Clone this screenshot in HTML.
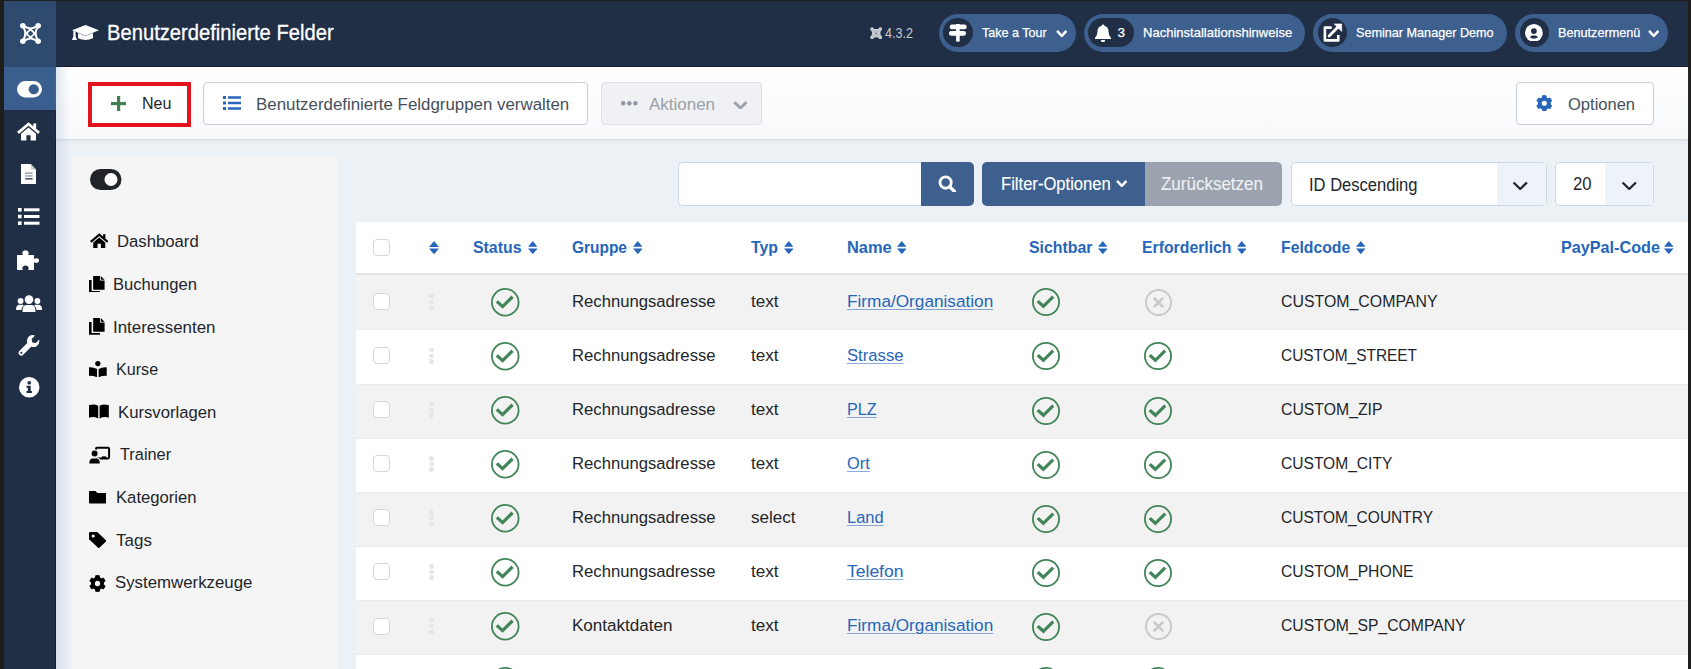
<!DOCTYPE html>
<html><head><meta charset="utf-8"><style>
html,body{margin:0;padding:0;}
body{width:1691px;height:669px;overflow:hidden;position:relative;background:#1e1e1c;font-family:"Liberation Sans", sans-serif;}
svg{display:block;}
</style></head><body>
<div style="position:absolute;left:56px;top:67px;width:1632px;height:602px;background:#ecf1f6;"></div><div style="position:absolute;left:56px;top:67px;width:16px;height:602px;background:linear-gradient(90deg,#d9e1ec,#ecf1f6);"></div><div style="position:absolute;left:56px;top:1px;width:1632px;height:66px;background:#202e46;"></div><div style="position:absolute;left:56px;top:66px;width:1632px;height:1px;background:#131b2d;"></div><svg style="position:absolute;left:72px;top:24px;" width="27" height="17" viewBox="0 3 27 19" preserveAspectRatio="none"><g fill="#fff"><path d="M0 10 L13.5 4 L27 10 L13.5 16 Z"/>
<path d="M6 13 L13.5 16.5 L21 13 L21 19 Q13.5 23 6 19 Z"/>
<path d="M1.3 10.8 L3.6 11.8 L3.6 17 L5 21 L0 21 L1.3 17 Z"/></g></svg><div style="position:absolute;left:107.3px;top:21.86px;font-size:21.9px;line-height:21.9px;color:#fff;font-weight:normal;white-space:nowrap;transform:scaleX(0.922);transform-origin:0 0;-webkit-text-stroke:0.3px #fff;">Benutzerdefinierte Felder</div><svg style="position:absolute;left:869.6px;top:26.7px;" width="12.4" height="12.4" viewBox="0 0 24 24" preserveAspectRatio="none"><g fill="none" stroke="#c5cad1" stroke-width="3.4">
<path d="M4.0 4.0 Q16.2 7.8 20.0 20.0"/><path d="M4.0 4.0 Q7.8 16.2 20.0 20.0"/>
<path d="M20.0 4.0 Q16.2 16.2 4.0 20.0"/><path d="M20.0 4.0 Q7.8 7.8 4.0 20.0"/>
<path d="M4.0 4.0 Q12 7.6 20.0 4.0"/><path d="M4.0 20.0 Q12 16.4 20.0 20.0"/>
<path d="M4.0 4.0 Q7.6 12 4.0 20.0"/><path d="M20.0 4.0 Q16.4 12 20.0 20.0"/>
</g><g fill="#c5cad1"><circle cx="4.0" cy="4.0" r="3.6"/><circle cx="20.0" cy="4.0" r="3.6"/><circle cx="4.0" cy="20.0" r="3.6"/><circle cx="20.0" cy="20.0" r="3.6"/></g></svg><div style="position:absolute;left:884.6px;top:25.98px;font-size:14.2px;line-height:14.2px;color:#c5cad1;font-weight:normal;white-space:nowrap;transform:scaleX(0.885);transform-origin:0 0;">4.3.2</div><div style="position:absolute;left:938.5px;top:13.5px;width:137.0px;height:38px;border-radius:19px;background:#3e608f;"></div><div style="position:absolute;left:943.2px;top:17.8px;width:29.5px;height:29.5px;background:#202e46;border-radius:50%;"></div><svg style="position:absolute;left:949.2px;top:24.1px;" width="18" height="17.6" viewBox="0 0 18 17.6" preserveAspectRatio="none"><g fill="#fff"><rect x="7.1" y="0" width="3.6" height="17.6"/>
<rect x="0.7" y="0.6" width="17" height="4.7" rx="2.2"/><rect x="0" y="7" width="17" height="4.7" rx="2.2"/></g></svg><div style="position:absolute;left:982px;top:26.47px;font-size:13.5px;line-height:13.5px;color:#fff;font-weight:normal;white-space:nowrap;transform:scaleX(0.929);transform-origin:0 0;-webkit-text-stroke:0.25px #fff;">Take a Tour</div><svg style="position:absolute;left:1055.5px;top:28.8px;" width="11.5" height="8" viewBox="0 -1 16 10.5" preserveAspectRatio="none"><path d="M1.5 1.5 L8 8 L14.5 1.5" fill="none" stroke="#fff" stroke-width="3.6" stroke-linecap="butt" stroke-linejoin="miter"/></svg><div style="position:absolute;left:1083.5px;top:13.5px;width:221.0px;height:38px;border-radius:19px;background:#3e608f;"></div><div style="position:absolute;left:1088px;top:18px;width:46px;height:29px;background:#202e46;border-radius:14.5px;"></div><svg style="position:absolute;left:1095px;top:23.5px;" width="16" height="18.3" viewBox="0 0 16 18.3" preserveAspectRatio="none"><path fill="#fff" d="M8 0.5 Q9.3 0.5 9.3 1.8 Q13.5 2.8 13.6 8 Q13.6 11.8 16 14 V15 H0 V14 Q2.4 11.8 2.4 8 Q2.5 2.8 6.7 1.8 Q6.7 0.5 8 0.5 Z"/><path fill="#fff" d="M5.8 16 H10.2 Q10 18.3 8 18.3 Q6 18.3 5.8 16 Z"/></svg><div style="position:absolute;left:1117.5px;top:26.47px;font-size:13.5px;line-height:13.5px;color:#fff;font-weight:normal;white-space:nowrap;-webkit-text-stroke:0.25px #fff;">3</div><div style="position:absolute;left:1142.5px;top:26.47px;font-size:13.5px;line-height:13.5px;color:#fff;font-weight:normal;white-space:nowrap;transform:scaleX(0.965);transform-origin:0 0;-webkit-text-stroke:0.25px #fff;">Nachinstallationshinweise</div><div style="position:absolute;left:1312.5px;top:13.5px;width:194.5px;height:38px;border-radius:19px;background:#3e608f;"></div><div style="position:absolute;left:1317.8px;top:17.8px;width:29.5px;height:29.5px;background:#202e46;border-radius:50%;"></div><svg style="position:absolute;left:1322px;top:22px;" width="21" height="21" viewBox="0 0 21 21" preserveAspectRatio="none"><path d="M9.7 5.6 H2.9 V18.4 H16.3 V12.9" fill="none" stroke="#fff" stroke-width="2.6" stroke-linejoin="round"/>
<path d="M7.1 13.9 L16 5" stroke="#fff" stroke-width="2.8" stroke-linecap="round"/><path d="M12.2 1.9 H19.7 V9.4 Z" fill="#fff" stroke="#fff" stroke-width="0.6" stroke-linejoin="round"/></svg><div style="position:absolute;left:1355.5px;top:26.47px;font-size:13.5px;line-height:13.5px;color:#fff;font-weight:normal;white-space:nowrap;transform:scaleX(0.936);transform-origin:0 0;-webkit-text-stroke:0.25px #fff;">Seminar Manager Demo</div><div style="position:absolute;left:1514.5px;top:13.5px;width:153.5px;height:38px;border-radius:19px;background:#3e608f;"></div><div style="position:absolute;left:1519.8px;top:17.8px;width:29.5px;height:29.5px;background:#202e46;border-radius:50%;"></div><svg style="position:absolute;left:1525.4px;top:23.5px;" width="17.8" height="17.8" viewBox="0 0 18 18" preserveAspectRatio="none"><circle cx="9" cy="9" r="9" fill="#fff"/><circle cx="9" cy="7.2" r="2.9" fill="#202e46"/>
<path d="M4.9 13.4 Q5.7 11.7 7.7 11.7 H10.3 Q12.3 11.7 13.1 13.4 Q11.4 14.9 9 14.9 Q6.6 14.9 4.9 13.4 Z" fill="#202e46"/></svg><div style="position:absolute;left:1557.5px;top:26.47px;font-size:13.5px;line-height:13.5px;color:#fff;font-weight:normal;white-space:nowrap;transform:scaleX(0.937);transform-origin:0 0;-webkit-text-stroke:0.25px #fff;">Benutzermen&uuml;</div><svg style="position:absolute;left:1648px;top:28.8px;" width="11.5" height="8" viewBox="0 -1 16 10.5" preserveAspectRatio="none"><path d="M1.5 1.5 L8 8 L14.5 1.5" fill="none" stroke="#fff" stroke-width="3.6" stroke-linecap="butt" stroke-linejoin="miter"/></svg><div style="position:absolute;left:4px;top:1px;width:52px;height:668px;background:#202e46;"></div><div style="position:absolute;left:54.5px;top:67px;width:1.5px;height:602px;background:#131d30;"></div><div style="position:absolute;left:4px;top:1px;width:52px;height:66px;background:#2e4a6e;"></div><svg style="position:absolute;left:18.5px;top:21.5px;" width="23" height="23" viewBox="0 0 24 24" preserveAspectRatio="none"><g fill="none" stroke="#fff" stroke-width="1.75">
<path d="M4.0 4.0 Q16.6 7.4 20.0 20.0"/><path d="M4.0 4.0 Q7.4 16.6 20.0 20.0"/>
<path d="M20.0 4.0 Q16.6 16.6 4.0 20.0"/><path d="M20.0 4.0 Q7.4 7.4 4.0 20.0"/>
<path d="M4.0 4.0 Q12 9.0 20.0 4.0"/><path d="M4.0 20.0 Q12 15.0 20.0 20.0"/>
<path d="M4.0 4.0 Q9.0 12 4.0 20.0"/><path d="M20.0 4.0 Q15.0 12 20.0 20.0"/>
</g><g fill="#fff"><circle cx="4.0" cy="4.0" r="2.9"/><circle cx="20.0" cy="4.0" r="2.9"/><circle cx="4.0" cy="20.0" r="2.9"/><circle cx="20.0" cy="20.0" r="2.9"/></g></svg><div style="position:absolute;left:4px;top:67px;width:52px;height:43px;background:#3a5e8e;"></div><svg style="position:absolute;left:17px;top:81px;" width="25" height="16.5" viewBox="0 0 25 16.5" preserveAspectRatio="none"><rect x="0" y="0" width="25" height="16.5" rx="8.25" fill="#fff"/><circle cx="16.75" cy="8.25" r="5.115" fill="#3a5e8e"/></svg><svg style="position:absolute;left:17px;top:122px;" width="23" height="18.5" viewBox="0 0 24 19" preserveAspectRatio="none"><g fill="#fff"><path d="M1 11.2 L12 2 L23 11.2" fill="none" stroke="#fff" stroke-width="2.8" stroke-linejoin="miter"/>
<rect x="17" y="1.5" width="3" height="5"/>
<path d="M4.2 12 L12 5.6 L19.8 12 L19.8 19 L14.2 19 L14.2 13.6 L9.8 13.6 L9.8 19 L4.2 19 Z"/></g></svg><svg style="position:absolute;left:20.8px;top:163.9px;" width="15.6" height="20" viewBox="0 0 16 20" preserveAspectRatio="none"><path d="M0 0 H10 L16 6 V20 H0 Z" fill="#fff"/><path d="M10.4 0.4 L15.6 5.6 H10.4 Z" fill="#c3c8cf"/>
<g fill="#202e46"><rect x="4.3" y="8.4" width="7.6" height="1.5" opacity="0.45"/><rect x="4.3" y="11.2" width="7.6" height="1.5" opacity="0.45"/><rect x="4.3" y="14" width="7.6" height="1.6" opacity="0.8"/></g></svg><svg style="position:absolute;left:18px;top:208px;" width="21.5" height="17" viewBox="0 0 21.5 17" preserveAspectRatio="none"><g fill="#fff"><rect x="0" y="0" width="3.6" height="3.6"/><rect x="0" y="6.7" width="3.6" height="3.6"/><rect x="0" y="13.4" width="3.6" height="3.6"/>
<rect x="6" y="0.3" width="15.5" height="3"/><rect x="6" y="7" width="15.5" height="3"/><rect x="6" y="13.7" width="15.5" height="3"/></g></svg><svg style="position:absolute;left:17px;top:250px;" width="23" height="20" viewBox="0 0 23 20" preserveAspectRatio="none"><path fill="#fff" d="M0 5 H6 Q4.5 3 6 1.2 Q8.5 -0.6 11 1.2 Q12.5 3 11 5 H17 V9 Q19 7.8 21 8.6 Q23.2 10.2 21 12.6 Q19 13.4 17 12.2 V20 H11 Q12.3 18 11 16.5 Q8.5 14.6 6 16.5 Q4.6 18 6 20 H0 Z"/></svg><svg style="position:absolute;left:16px;top:294.5px;" width="26" height="17" viewBox="0 0 26 17" preserveAspectRatio="none"><g fill="#fff"><circle cx="13" cy="4.6" r="4.3"/><circle cx="4.6" cy="6" r="2.9"/><circle cx="21.4" cy="6" r="2.9"/>
<path d="M6.5 17 Q6.3 10.3 10.2 10 H15.8 Q19.7 10.3 19.5 17 Z"/>
<path d="M0 15 Q0 10 3 9.8 H6.8 Q7.5 10.2 7.8 10.8 Q5.6 12.2 5.4 15 Z"/>
<path d="M26 15 Q26 10 23 9.8 H19.2 Q18.5 10.2 18.2 10.8 Q20.4 12.2 20.6 15 Z"/></g></svg><svg style="position:absolute;left:18px;top:334.5px;" width="21.5" height="21" viewBox="0 0 21.5 21" preserveAspectRatio="none"><path fill="#fff" d="M21.3 4.6 L17.8 8 L14.3 7.4 L13.6 3.9 L17 0.5 Q12.6 -0.8 10.2 2.2 Q8.4 4.6 9.3 7.9 L1.3 15.9 Q-0.4 17.8 1.3 19.8 Q3.3 21.5 5.2 19.8 L13.2 11.8 Q16.5 12.7 18.9 10.9 Q21.9 8.5 21.3 4.6 Z"/><circle cx="3.3" cy="17.8" r="1.1" fill="#1f2e45"/></svg><svg style="position:absolute;left:19px;top:377px;" width="20.5" height="20.5" viewBox="0 0 20 20" preserveAspectRatio="none"><circle cx="10" cy="10" r="10" fill="#fff"/><g fill="#202e46"><circle cx="10" cy="5.6" r="1.8"/><path d="M7.3 8.6 H11.4 V13.6 H12.7 V15.6 H7.3 V13.6 H8.6 V10.6 H7.3 Z"/></g></svg><div style="position:absolute;left:56px;top:67px;width:1632px;height:72.2px;background:linear-gradient(180deg,#ffffff 0%,#f7f9fb 100%);box-shadow:0 1px 3px rgba(120,140,170,0.25);"></div><div style="position:absolute;left:88px;top:82px;width:102.5px;height:45px;background:#fff;box-sizing:border-box;border:4px solid #e3141e;"></div><svg style="position:absolute;left:110.5px;top:96px;" width="15.2" height="15.2" viewBox="0 0 15.2 15.2" preserveAspectRatio="none"><g fill="#457d54"><rect x="6" y="0" width="3.2" height="15.2"/><rect x="0" y="6" width="15.2" height="3.2"/></g></svg><div style="position:absolute;left:142px;top:95.37px;font-size:17.4px;line-height:17.4px;color:#22262a;font-weight:normal;white-space:nowrap;transform:scaleX(0.9235632183908047);transform-origin:0 0;">Neu</div><div style="position:absolute;left:203px;top:82px;width:385px;height:43px;background:#fff;box-sizing:border-box;border:1px solid #c6ceda;border-radius:4px;"></div><svg style="position:absolute;left:223px;top:96px;" width="18" height="14" viewBox="0 0 21.5 17" preserveAspectRatio="none"><g fill="#2666ba"><rect x="0" y="0" width="3.6" height="3.6"/><rect x="0" y="6.7" width="3.6" height="3.6"/><rect x="0" y="13.4" width="3.6" height="3.6"/>
<rect x="6" y="0.3" width="15.5" height="3"/><rect x="6" y="7" width="15.5" height="3"/><rect x="6" y="13.7" width="15.5" height="3"/></g></svg><div style="position:absolute;left:255.5px;top:95.77px;font-size:17.4px;line-height:17.4px;color:#46505a;font-weight:normal;white-space:nowrap;transform:scaleX(0.9701149425287356);transform-origin:0 0;">Benutzerdefinierte Feldgruppen verwalten</div><div style="position:absolute;left:601px;top:82px;width:160.5px;height:43px;background:#eff1f4;box-sizing:border-box;border:1px solid #dde2e8;border-radius:4px;"></div><svg style="position:absolute;left:621px;top:101.3px;" width="16.6" height="4.6" viewBox="0 0 16.6 4.4" preserveAspectRatio="none"><g fill="#8d96a2"><circle cx="2.2" cy="2.2" r="2.2"/><circle cx="8.3" cy="2.2" r="2.2"/><circle cx="14.4" cy="2.2" r="2.2"/></g></svg><div style="position:absolute;left:649px;top:95.77px;font-size:17.4px;line-height:17.4px;color:#9aa0a8;font-weight:normal;white-space:nowrap;transform:scaleX(0.975287356321839);transform-origin:0 0;">Aktionen</div><svg style="position:absolute;left:732.6px;top:99.6px;" width="14.8" height="9.4" viewBox="0 -1 16 10.5" preserveAspectRatio="none"><path d="M1.5 1.5 L8 8 L14.5 1.5" fill="none" stroke="#9ba1a9" stroke-width="3.1" stroke-linecap="butt" stroke-linejoin="miter"/></svg><div style="position:absolute;left:1515.5px;top:82px;width:138.5px;height:43px;background:#fff;box-sizing:border-box;border:1px solid #c6ceda;border-radius:4px;"></div><svg style="position:absolute;left:1535.6px;top:94.6px;" width="16.6" height="16.6" viewBox="-0.4 -0.4 16.8 16.8" preserveAspectRatio="none"><polygon points="5.89,2.38 6.25,0.19 9.75,0.19 10.11,2.38 11.81,3.36 13.89,2.58 15.63,5.61 13.92,7.02 13.92,8.98 15.63,10.39 13.89,13.42 11.81,12.64 10.11,13.62 9.75,15.81 6.25,15.81 5.89,13.62 4.19,12.64 2.11,13.42 0.37,10.39 2.08,8.98 2.08,7.02 0.37,5.61 2.11,2.58 4.19,3.36" fill="#2666ba" stroke="#2666ba" stroke-width="0.8" stroke-linejoin="round"/><circle cx="8" cy="8" r="6.2" fill="#2666ba"/><circle cx="8" cy="8" r="2.6" fill="#fff"/></svg><div style="position:absolute;left:1567.5px;top:95.97px;font-size:17.4px;line-height:17.4px;color:#46505a;font-weight:normal;white-space:nowrap;transform:scaleX(0.9500000000000002);transform-origin:0 0;">Optionen</div><div style="position:absolute;left:56px;top:67px;width:14px;height:73px;background:linear-gradient(90deg,rgba(200,212,228,0.55),rgba(255,255,255,0));"></div><div style="position:absolute;left:72.2px;top:156.6px;width:266px;height:513px;background:#f5f5f5;"></div><svg style="position:absolute;left:90px;top:169px;" width="31.5" height="21" viewBox="0 0 31.5 21" preserveAspectRatio="none"><rect x="0" y="0" width="31.5" height="21" rx="10.5" fill="#212529"/><circle cx="21.0" cy="10.5" r="6.51" fill="#fff"/></svg><div style="position:absolute;left:117.2px;top:233.47px;font-size:17.4px;line-height:17.4px;color:#22262a;font-weight:normal;white-space:nowrap;transform:scaleX(0.960344827586207);transform-origin:0 0;">Dashboard</div><svg style="position:absolute;left:89.5px;top:233.4px;" width="18.5" height="15" viewBox="0 0 24 19" preserveAspectRatio="none"><g fill="#000"><path d="M1 11.2 L12 2 L23 11.2" fill="none" stroke="#000" stroke-width="2.8" stroke-linejoin="miter"/>
<rect x="17" y="1.5" width="3" height="5"/>
<path d="M4.2 12 L12 5.6 L19.8 12 L19.8 19 L14.2 19 L14.2 13.6 L9.8 13.6 L9.8 19 L4.2 19 Z"/></g></svg><div style="position:absolute;left:112.7px;top:276.07px;font-size:17.4px;line-height:17.4px;color:#22262a;font-weight:normal;white-space:nowrap;transform:scaleX(0.9551724137931036);transform-origin:0 0;">Buchungen</div><svg style="position:absolute;left:89px;top:275.5px;" width="15.6" height="16.8" viewBox="0 0 15 17" preserveAspectRatio="none"><g fill="#000"><path d="M4 0 H10.5 V4.5 H15 V14 H4 Z"/><path d="M11.3 0 L15 3.7 H11.3 Z"/>
<path d="M0 4 H2.5 V15.2 H10.5 V17 H0 Z"/></g></svg><div style="position:absolute;left:113.3px;top:318.67px;font-size:17.4px;line-height:17.4px;color:#22262a;font-weight:normal;white-space:nowrap;transform:scaleX(0.9729885057471265);transform-origin:0 0;">Interessenten</div><svg style="position:absolute;left:89px;top:318.1px;" width="15.6" height="16.8" viewBox="0 0 15 17" preserveAspectRatio="none"><g fill="#000"><path d="M4 0 H10.5 V4.5 H15 V14 H4 Z"/><path d="M11.3 0 L15 3.7 H11.3 Z"/>
<path d="M0 4 H2.5 V15.2 H10.5 V17 H0 Z"/></g></svg><div style="position:absolute;left:115.5px;top:361.27px;font-size:17.4px;line-height:17.4px;color:#22262a;font-weight:normal;white-space:nowrap;transform:scaleX(0.9270114942528735);transform-origin:0 0;">Kurse</div><svg style="position:absolute;left:89px;top:360.7px;" width="17.7" height="16.3" viewBox="0 0 17.6 16.3" preserveAspectRatio="none"><g fill="#000"><circle cx="8.8" cy="2.6" r="2.6"/><path d="M0 6.2 Q4.5 5.9 8 8 V16.3 Q4.5 14.6 0 14.9 Z"/><path d="M17.6 6.2 Q13.1 5.9 9.6 8 V16.3 Q13.1 14.6 17.6 14.9 Z"/></g></svg><div style="position:absolute;left:117.60000000000001px;top:403.87px;font-size:17.4px;line-height:17.4px;color:#22262a;font-weight:normal;white-space:nowrap;transform:scaleX(0.9591954022988507);transform-origin:0 0;">Kursvorlagen</div><svg style="position:absolute;left:88.6px;top:404.4px;overflow:visible;" width="19.8" height="14.4" viewBox="0 0 20 13.2" preserveAspectRatio="none"><g fill="#000"><path d="M0 1.2 Q5 -0.5 9.3 1.6 V13.2 Q5 11.2 0 12.5 Z"/><path d="M20 1.2 Q15 -0.5 10.7 1.6 V13.2 Q15 11.2 20 12.5 Z"/></g></svg><div style="position:absolute;left:120.3px;top:446.47px;font-size:17.4px;line-height:17.4px;color:#22262a;font-weight:normal;white-space:nowrap;transform:scaleX(0.9385057471264368);transform-origin:0 0;">Trainer</div><svg style="position:absolute;left:89px;top:445.5px;overflow:visible;" width="21.5" height="17.5" viewBox="0 0 21.5 17.5" preserveAspectRatio="none"><rect x="6.9" y="1.8" width="13.2" height="10.6" rx="1.3" fill="none" stroke="#000" stroke-width="2"/>
<rect x="12.8" y="10.4" width="4.4" height="2.6" fill="#000"/>
<circle cx="5.6" cy="7.6" r="4.3" fill="#f5f5f5"/><path d="M-1 18.5 Q-1 11.2 4 11.2 H7.3 Q12 11.2 12 18.5 Z" fill="#f5f5f5"/>
<circle cx="5.6" cy="7.6" r="3.0" fill="#000"/><path d="M0.3 17.4 Q0.3 12.5 4 12.5 H7.3 Q10.8 12.5 10.8 17.4 Z" fill="#000"/></svg><div style="position:absolute;left:115.60000000000001px;top:489.07px;font-size:17.4px;line-height:17.4px;color:#22262a;font-weight:normal;white-space:nowrap;transform:scaleX(0.9580459770114944);transform-origin:0 0;">Kategorien</div><svg style="position:absolute;left:89px;top:491.1px;" width="17.4" height="12.6" viewBox="0 0 17.5 12.8" preserveAspectRatio="none"><path fill="#000" d="M0 1 Q0 0 1 0 H6.5 L8.5 2 H16.5 Q17.5 2 17.5 3 V11.8 Q17.5 12.8 16.5 12.8 H1 Q0 12.8 0 11.8 Z"/></svg><div style="position:absolute;left:115.60000000000001px;top:531.67px;font-size:17.4px;line-height:17.4px;color:#22262a;font-weight:normal;white-space:nowrap;transform:scaleX(0.9775862068965518);transform-origin:0 0;">Tags</div><svg style="position:absolute;left:89px;top:532px;" width="17.4" height="16.1" viewBox="0 0 17.4 17" preserveAspectRatio="none"><path fill="#000" d="M0 1.2 Q0 0 1.2 0 H8.3 L17 8.7 Q17.6 9.4 17 10 L10.4 16.6 Q9.7 17.2 9.1 16.6 L0 7.6 Z"/><circle cx="4.2" cy="4.2" r="1.6" fill="#f5f5f5"/></svg><div style="position:absolute;left:115.10000000000001px;top:574.27px;font-size:17.4px;line-height:17.4px;color:#22262a;font-weight:normal;white-space:nowrap;transform:scaleX(0.9666666666666668);transform-origin:0 0;">Systemwerkzeuge</div><svg style="position:absolute;left:89px;top:574.8px;" width="17" height="17" viewBox="-0.4 -0.4 16.8 16.8" preserveAspectRatio="none"><polygon points="5.89,2.38 6.25,0.19 9.75,0.19 10.11,2.38 11.81,3.36 13.89,2.58 15.63,5.61 13.92,7.02 13.92,8.98 15.63,10.39 13.89,13.42 11.81,12.64 10.11,13.62 9.75,15.81 6.25,15.81 5.89,13.62 4.19,12.64 2.11,13.42 0.37,10.39 2.08,8.98 2.08,7.02 0.37,5.61 2.11,2.58 4.19,3.36" fill="#000" stroke="#000" stroke-width="0.8" stroke-linejoin="round"/><circle cx="8" cy="8" r="6.2" fill="#000"/><circle cx="8" cy="8" r="2.6" fill="#f5f5f5"/></svg><div style="position:absolute;left:678px;top:162px;width:244px;height:44px;background:#fff;box-sizing:border-box;border:1px solid #cdd8e6;border-right:none;border-radius:5px 0 0 5px;"></div><div style="position:absolute;left:921px;top:162px;width:53px;height:44px;background:#3d608f;border-radius:0 5px 5px 0;"></div><svg style="position:absolute;left:938.3px;top:174.6px;" width="17.4" height="17.4" viewBox="0 0 16 16" preserveAspectRatio="none"><circle cx="7" cy="7" r="5.2" fill="none" stroke="#fff" stroke-width="2.6"/><path d="M10.8 10.8 L15.2 15.2" stroke="#fff" stroke-width="3" stroke-linecap="round"/></svg><div style="position:absolute;left:982px;top:162px;width:163px;height:44px;background:#3d608f;border-radius:5px 0 0 5px;"></div><div style="position:absolute;left:1001.2px;top:175.06px;font-size:18px;line-height:18px;color:#fff;font-weight:normal;white-space:nowrap;transform:scaleX(0.9222222222222223);transform-origin:0 0;-webkit-text-stroke:0.15px #fff;">Filter-Optionen</div><svg style="position:absolute;left:1115.5px;top:179.2px;" width="11.5" height="8" viewBox="0 -1 16 10.5" preserveAspectRatio="none"><path d="M1.5 1.5 L8 8 L14.5 1.5" fill="none" stroke="#fff" stroke-width="3.5" stroke-linecap="butt" stroke-linejoin="miter"/></svg><div style="position:absolute;left:1145px;top:162px;width:137px;height:44px;background:#9ba3ae;border-radius:0 5px 5px 0;"></div><div style="position:absolute;left:1161.2px;top:175.06px;font-size:18px;line-height:18px;color:#eef0f2;font-weight:normal;white-space:nowrap;transform:scaleX(0.9433333333333334);transform-origin:0 0;-webkit-text-stroke:0.15px #eef0f2;">Zur&uuml;cksetzen</div><div style="position:absolute;left:1290.5px;top:162px;width:256px;height:43.5px;background:#fff;box-sizing:border-box;border:1px solid #cdd8e6;border-radius:5px;overflow:hidden;"></div><div style="position:absolute;left:1496.5px;top:163px;width:49px;height:41.5px;background:#eef2f9;"></div><div style="position:absolute;left:1308.8px;top:175.51px;font-size:18.3px;line-height:18.3px;color:#22262a;font-weight:normal;white-space:nowrap;transform:scaleX(0.9043715846994536);transform-origin:0 0;">ID Descending</div><svg style="position:absolute;left:1512.3px;top:179.8px;" width="16.5" height="10.5" viewBox="0 -1 16 10.5" preserveAspectRatio="none"><path d="M1.5 1.5 L8 8 L14.5 1.5" fill="none" stroke="#22262a" stroke-width="2.2" stroke-linecap="butt" stroke-linejoin="miter"/></svg><div style="position:absolute;left:1555px;top:162px;width:99px;height:43.5px;background:#fff;box-sizing:border-box;border:1px solid #cdd8e6;border-radius:5px;"></div><div style="position:absolute;left:1604.5px;top:163px;width:48.5px;height:41.5px;background:#eef2f9;"></div><div style="position:absolute;left:1572.6px;top:175.26px;font-size:18.6px;line-height:18.6px;color:#22262a;font-weight:normal;white-space:nowrap;transform:scaleX(0.8978494623655913);transform-origin:0 0;">20</div><svg style="position:absolute;left:1620.8px;top:179.8px;" width="16.5" height="10.5" viewBox="0 -1 16 10.5" preserveAspectRatio="none"><path d="M1.5 1.5 L8 8 L14.5 1.5" fill="none" stroke="#22262a" stroke-width="2.2" stroke-linecap="butt" stroke-linejoin="miter"/></svg><div style="position:absolute;left:356px;top:222px;width:1332px;height:447px;overflow:hidden;"><div style="position:absolute;left:0px;top:0px;width:1400px;height:51px;background:#fff;"></div><div style="position:absolute;left:0px;top:51px;width:1400px;height:2px;background:#dfe3e8;"></div><div style="position:absolute;left:17px;top:17px;width:17px;height:17px;background:#fff;box-sizing:border-box;border:1px solid #d5d7da;border-radius:4px;"></div><svg style="position:absolute;left:72.89999999999998px;top:18.5px;" width="10" height="13.3" viewBox="0 0 10 13.3" preserveAspectRatio="none"><g fill="#2666ba"><path d="M0 5.9 L5 0 L10 5.9 Z"/><path d="M0 7.5 L5 13.3 L10 7.5 Z"/></g></svg><div style="position:absolute;left:117.39999999999999px;top:17.33px;font-size:16.5px;line-height:16.5px;color:#2666ba;font-weight:bold;white-space:nowrap;transform:scaleX(0.9609696969696969);transform-origin:0 0;">Status</div><svg style="position:absolute;left:171.90000000000003px;top:18.5px;" width="9.6" height="13.2" viewBox="0 0 10 13.3" preserveAspectRatio="none"><g fill="#2666ba"><path d="M0 5.9 L5 0 L10 5.9 Z"/><path d="M0 7.5 L5 13.3 L10 7.5 Z"/></g></svg><div style="position:absolute;left:216.09999999999997px;top:17.33px;font-size:16.5px;line-height:16.5px;color:#2666ba;font-weight:bold;white-space:nowrap;transform:scaleX(0.9367272727272727);transform-origin:0 0;">Gruppe</div><svg style="position:absolute;left:276.59999999999997px;top:18.5px;" width="9.6" height="13.2" viewBox="0 0 10 13.3" preserveAspectRatio="none"><g fill="#2666ba"><path d="M0 5.9 L5 0 L10 5.9 Z"/><path d="M0 7.5 L5 13.3 L10 7.5 Z"/></g></svg><div style="position:absolute;left:395.09999999999997px;top:17.33px;font-size:16.5px;line-height:16.5px;color:#2666ba;font-weight:bold;white-space:nowrap;transform:scaleX(0.9629090909090909);transform-origin:0 0;">Typ</div><svg style="position:absolute;left:427.7px;top:18.5px;" width="9.6" height="13.2" viewBox="0 0 10 13.3" preserveAspectRatio="none"><g fill="#2666ba"><path d="M0 5.9 L5 0 L10 5.9 Z"/><path d="M0 7.5 L5 13.3 L10 7.5 Z"/></g></svg><div style="position:absolute;left:490.99999999999994px;top:17.33px;font-size:16.5px;line-height:16.5px;color:#2666ba;font-weight:bold;white-space:nowrap;transform:scaleX(0.9939393939393939);transform-origin:0 0;">Name</div><svg style="position:absolute;left:540.9px;top:18.5px;" width="9.6" height="13.2" viewBox="0 0 10 13.3" preserveAspectRatio="none"><g fill="#2666ba"><path d="M0 5.9 L5 0 L10 5.9 Z"/><path d="M0 7.5 L5 13.3 L10 7.5 Z"/></g></svg><div style="position:absolute;left:672.5px;top:17.33px;font-size:16.5px;line-height:16.5px;color:#2666ba;font-weight:bold;white-space:nowrap;transform:scaleX(0.9609696969696969);transform-origin:0 0;">Sichtbar</div><svg style="position:absolute;left:741.5999999999999px;top:18.5px;" width="9.6" height="13.2" viewBox="0 0 10 13.3" preserveAspectRatio="none"><g fill="#2666ba"><path d="M0 5.9 L5 0 L10 5.9 Z"/><path d="M0 7.5 L5 13.3 L10 7.5 Z"/></g></svg><div style="position:absolute;left:786.0px;top:17.33px;font-size:16.5px;line-height:16.5px;color:#2666ba;font-weight:bold;white-space:nowrap;transform:scaleX(0.9570909090909091);transform-origin:0 0;">Erforderlich</div><svg style="position:absolute;left:880.5px;top:18.5px;" width="9.6" height="13.2" viewBox="0 0 10 13.3" preserveAspectRatio="none"><g fill="#2666ba"><path d="M0 5.9 L5 0 L10 5.9 Z"/><path d="M0 7.5 L5 13.3 L10 7.5 Z"/></g></svg><div style="position:absolute;left:925.4000000000001px;top:17.33px;font-size:16.5px;line-height:16.5px;color:#2666ba;font-weight:bold;white-space:nowrap;transform:scaleX(0.9551515151515151);transform-origin:0 0;">Feldcode</div><svg style="position:absolute;left:1000.2px;top:18.5px;" width="9.6" height="13.2" viewBox="0 0 10 13.3" preserveAspectRatio="none"><g fill="#2666ba"><path d="M0 5.9 L5 0 L10 5.9 Z"/><path d="M0 7.5 L5 13.3 L10 7.5 Z"/></g></svg><div style="position:absolute;left:1204.5px;top:17.33px;font-size:16.5px;line-height:16.5px;color:#2666ba;font-weight:bold;white-space:nowrap;transform:scaleX(0.9803636363636362);transform-origin:0 0;">PayPal-Code</div><svg style="position:absolute;left:1308.3999999999999px;top:18.5px;" width="9.6" height="13.2" viewBox="0 0 10 13.3" preserveAspectRatio="none"><g fill="#2666ba"><path d="M0 5.9 L5 0 L10 5.9 Z"/><path d="M0 7.5 L5 13.3 L10 7.5 Z"/></g></svg><div style="position:absolute;left:0px;top:53.4px;width:1400px;height:55px;background:#f2f2f2;"></div><div style="position:absolute;left:17px;top:71.2px;width:17px;height:17px;background:#fff;box-sizing:border-box;border:1px solid #d5d7da;border-radius:4px;"></div><div style="position:absolute;left:73.30000000000001px;top:71.80000000000001px;width:4.6px;height:4.6px;background:#e6e6e6;border-radius:50%;"></div><div style="position:absolute;left:73.30000000000001px;top:77.50000000000001px;width:4.6px;height:4.6px;background:#e6e6e6;border-radius:50%;"></div><div style="position:absolute;left:73.30000000000001px;top:83.20000000000002px;width:4.6px;height:4.6px;background:#e6e6e6;border-radius:50%;"></div><svg style="position:absolute;left:135.25px;top:66.15px;" width="28.5" height="28.5" viewBox="0 0 28 28" preserveAspectRatio="none"><circle cx="14" cy="14" r="13.1" fill="none" stroke="#428558" stroke-width="1.8"/>
<path d="M5.7 13.1 L11.4 18.3 L21.2 8.6" fill="none" stroke="#428558" stroke-width="3.2" stroke-linecap="butt" stroke-linejoin="miter"/></svg><svg style="position:absolute;left:675.5999999999999px;top:66.4px;" width="28" height="28" viewBox="0 0 28 28" preserveAspectRatio="none"><circle cx="14" cy="14" r="13.1" fill="none" stroke="#428558" stroke-width="1.8"/>
<path d="M5.7 13.1 L11.4 18.3 L21.2 8.6" fill="none" stroke="#428558" stroke-width="3.2" stroke-linecap="butt" stroke-linejoin="miter"/></svg><svg style="position:absolute;left:788.9000000000001px;top:66.9px;" width="27" height="27" viewBox="0 0 28 28" preserveAspectRatio="none"><circle cx="14" cy="14" r="13" fill="none" stroke="#c9c9c9" stroke-width="2.1"/>
<path d="M9.2 9.2 L18.8 18.8 M18.8 9.2 L9.2 18.8" fill="none" stroke="#c9c9c9" stroke-width="2.8"/></svg><div style="position:absolute;left:216.09999999999997px;top:71.07px;font-size:17.4px;line-height:17.4px;color:#22262a;font-weight:normal;white-space:nowrap;transform:scaleX(0.9580459770114944);transform-origin:0 0;">Rechnungsadresse</div><div style="position:absolute;left:395.09999999999997px;top:71.07px;font-size:17.4px;line-height:17.4px;color:#22262a;font-weight:normal;white-space:nowrap;transform:scaleX(0.9816091954022989);transform-origin:0 0;">text</div><div style="position:absolute;left:490.99999999999994px;top:71.07px;font-size:17.4px;line-height:17.4px;color:#2666ba;white-space:nowrap;transform:scaleX(0.989080459770115);transform-origin:0 0;text-decoration:underline;text-decoration-color:rgba(42,105,184,0.55);text-decoration-thickness:1px;text-underline-offset:1.5px;">Firma/Organisation</div><div style="position:absolute;left:925.0999999999999px;top:71.07px;font-size:17.4px;line-height:17.4px;color:#22262a;font-weight:normal;white-space:nowrap;transform:scaleX(0.9132183908045978);transform-origin:0 0;">CUSTOM_COMPANY</div><div style="position:absolute;left:0px;top:107.44999999999999px;width:1400px;height:55px;background:#fff;box-sizing:border-box;border-top:1px solid #e9ecef;"></div><div style="position:absolute;left:17px;top:125.24999999999999px;width:17px;height:17px;background:#fff;box-sizing:border-box;border:1px solid #d5d7da;border-radius:4px;"></div><div style="position:absolute;left:73.30000000000001px;top:125.85px;width:4.6px;height:4.6px;background:#e6e6e6;border-radius:50%;"></div><div style="position:absolute;left:73.30000000000001px;top:131.54999999999998px;width:4.6px;height:4.6px;background:#e6e6e6;border-radius:50%;"></div><div style="position:absolute;left:73.30000000000001px;top:137.25px;width:4.6px;height:4.6px;background:#e6e6e6;border-radius:50%;"></div><svg style="position:absolute;left:135.25px;top:120.19999999999999px;" width="28.5" height="28.5" viewBox="0 0 28 28" preserveAspectRatio="none"><circle cx="14" cy="14" r="13.1" fill="none" stroke="#428558" stroke-width="1.8"/>
<path d="M5.7 13.1 L11.4 18.3 L21.2 8.6" fill="none" stroke="#428558" stroke-width="3.2" stroke-linecap="butt" stroke-linejoin="miter"/></svg><svg style="position:absolute;left:675.5999999999999px;top:120.44999999999999px;" width="28" height="28" viewBox="0 0 28 28" preserveAspectRatio="none"><circle cx="14" cy="14" r="13.1" fill="none" stroke="#428558" stroke-width="1.8"/>
<path d="M5.7 13.1 L11.4 18.3 L21.2 8.6" fill="none" stroke="#428558" stroke-width="3.2" stroke-linecap="butt" stroke-linejoin="miter"/></svg><svg style="position:absolute;left:788.4000000000001px;top:120.44999999999999px;" width="28" height="28" viewBox="0 0 28 28" preserveAspectRatio="none"><circle cx="14" cy="14" r="13.1" fill="none" stroke="#428558" stroke-width="1.8"/>
<path d="M5.7 13.1 L11.4 18.3 L21.2 8.6" fill="none" stroke="#428558" stroke-width="3.2" stroke-linecap="butt" stroke-linejoin="miter"/></svg><div style="position:absolute;left:216.09999999999997px;top:125.12px;font-size:17.4px;line-height:17.4px;color:#22262a;font-weight:normal;white-space:nowrap;transform:scaleX(0.9580459770114944);transform-origin:0 0;">Rechnungsadresse</div><div style="position:absolute;left:395.09999999999997px;top:125.12px;font-size:17.4px;line-height:17.4px;color:#22262a;font-weight:normal;white-space:nowrap;transform:scaleX(0.9816091954022989);transform-origin:0 0;">text</div><div style="position:absolute;left:490.99999999999994px;top:125.12px;font-size:17.4px;line-height:17.4px;color:#2666ba;white-space:nowrap;transform:scaleX(0.9580459770114944);transform-origin:0 0;text-decoration:underline;text-decoration-color:rgba(42,105,184,0.55);text-decoration-thickness:1px;text-underline-offset:1.5px;">Strasse</div><div style="position:absolute;left:925.0999999999999px;top:125.12px;font-size:17.4px;line-height:17.4px;color:#22262a;font-weight:normal;white-space:nowrap;transform:scaleX(0.8873563218390805);transform-origin:0 0;">CUSTOM_STREET</div><div style="position:absolute;left:0px;top:161.5px;width:1400px;height:55px;background:#f2f2f2;box-sizing:border-box;border-top:1px solid #e9ecef;"></div><div style="position:absolute;left:17px;top:179.3px;width:17px;height:17px;background:#fff;box-sizing:border-box;border:1px solid #d5d7da;border-radius:4px;"></div><div style="position:absolute;left:73.30000000000001px;top:179.9px;width:4.6px;height:4.6px;background:#e6e6e6;border-radius:50%;"></div><div style="position:absolute;left:73.30000000000001px;top:185.6px;width:4.6px;height:4.6px;background:#e6e6e6;border-radius:50%;"></div><div style="position:absolute;left:73.30000000000001px;top:191.3px;width:4.6px;height:4.6px;background:#e6e6e6;border-radius:50%;"></div><svg style="position:absolute;left:135.25px;top:174.25px;" width="28.5" height="28.5" viewBox="0 0 28 28" preserveAspectRatio="none"><circle cx="14" cy="14" r="13.1" fill="none" stroke="#428558" stroke-width="1.8"/>
<path d="M5.7 13.1 L11.4 18.3 L21.2 8.6" fill="none" stroke="#428558" stroke-width="3.2" stroke-linecap="butt" stroke-linejoin="miter"/></svg><svg style="position:absolute;left:675.5999999999999px;top:174.5px;" width="28" height="28" viewBox="0 0 28 28" preserveAspectRatio="none"><circle cx="14" cy="14" r="13.1" fill="none" stroke="#428558" stroke-width="1.8"/>
<path d="M5.7 13.1 L11.4 18.3 L21.2 8.6" fill="none" stroke="#428558" stroke-width="3.2" stroke-linecap="butt" stroke-linejoin="miter"/></svg><svg style="position:absolute;left:788.4000000000001px;top:174.5px;" width="28" height="28" viewBox="0 0 28 28" preserveAspectRatio="none"><circle cx="14" cy="14" r="13.1" fill="none" stroke="#428558" stroke-width="1.8"/>
<path d="M5.7 13.1 L11.4 18.3 L21.2 8.6" fill="none" stroke="#428558" stroke-width="3.2" stroke-linecap="butt" stroke-linejoin="miter"/></svg><div style="position:absolute;left:216.09999999999997px;top:179.17px;font-size:17.4px;line-height:17.4px;color:#22262a;font-weight:normal;white-space:nowrap;transform:scaleX(0.9580459770114944);transform-origin:0 0;">Rechnungsadresse</div><div style="position:absolute;left:395.09999999999997px;top:179.17px;font-size:17.4px;line-height:17.4px;color:#22262a;font-weight:normal;white-space:nowrap;transform:scaleX(0.9816091954022989);transform-origin:0 0;">text</div><div style="position:absolute;left:490.99999999999994px;top:179.17px;font-size:17.4px;line-height:17.4px;color:#2666ba;white-space:nowrap;transform:scaleX(0.9264367816091955);transform-origin:0 0;text-decoration:underline;text-decoration-color:rgba(42,105,184,0.55);text-decoration-thickness:1px;text-underline-offset:1.5px;">PLZ</div><div style="position:absolute;left:925.0999999999999px;top:179.17px;font-size:17.4px;line-height:17.4px;color:#22262a;font-weight:normal;white-space:nowrap;transform:scaleX(0.9080459770114944);transform-origin:0 0;">CUSTOM_ZIP</div><div style="position:absolute;left:0px;top:215.54999999999998px;width:1400px;height:55px;background:#fff;box-sizing:border-box;border-top:1px solid #e9ecef;"></div><div style="position:absolute;left:17px;top:233.35px;width:17px;height:17px;background:#fff;box-sizing:border-box;border:1px solid #d5d7da;border-radius:4px;"></div><div style="position:absolute;left:73.30000000000001px;top:233.95px;width:4.6px;height:4.6px;background:#e6e6e6;border-radius:50%;"></div><div style="position:absolute;left:73.30000000000001px;top:239.64999999999998px;width:4.6px;height:4.6px;background:#e6e6e6;border-radius:50%;"></div><div style="position:absolute;left:73.30000000000001px;top:245.35px;width:4.6px;height:4.6px;background:#e6e6e6;border-radius:50%;"></div><svg style="position:absolute;left:135.25px;top:228.29999999999998px;" width="28.5" height="28.5" viewBox="0 0 28 28" preserveAspectRatio="none"><circle cx="14" cy="14" r="13.1" fill="none" stroke="#428558" stroke-width="1.8"/>
<path d="M5.7 13.1 L11.4 18.3 L21.2 8.6" fill="none" stroke="#428558" stroke-width="3.2" stroke-linecap="butt" stroke-linejoin="miter"/></svg><svg style="position:absolute;left:675.5999999999999px;top:228.54999999999998px;" width="28" height="28" viewBox="0 0 28 28" preserveAspectRatio="none"><circle cx="14" cy="14" r="13.1" fill="none" stroke="#428558" stroke-width="1.8"/>
<path d="M5.7 13.1 L11.4 18.3 L21.2 8.6" fill="none" stroke="#428558" stroke-width="3.2" stroke-linecap="butt" stroke-linejoin="miter"/></svg><svg style="position:absolute;left:788.4000000000001px;top:228.54999999999998px;" width="28" height="28" viewBox="0 0 28 28" preserveAspectRatio="none"><circle cx="14" cy="14" r="13.1" fill="none" stroke="#428558" stroke-width="1.8"/>
<path d="M5.7 13.1 L11.4 18.3 L21.2 8.6" fill="none" stroke="#428558" stroke-width="3.2" stroke-linecap="butt" stroke-linejoin="miter"/></svg><div style="position:absolute;left:216.09999999999997px;top:233.22px;font-size:17.4px;line-height:17.4px;color:#22262a;font-weight:normal;white-space:nowrap;transform:scaleX(0.9580459770114944);transform-origin:0 0;">Rechnungsadresse</div><div style="position:absolute;left:395.09999999999997px;top:233.22px;font-size:17.4px;line-height:17.4px;color:#22262a;font-weight:normal;white-space:nowrap;transform:scaleX(0.9816091954022989);transform-origin:0 0;">text</div><div style="position:absolute;left:490.99999999999994px;top:233.22px;font-size:17.4px;line-height:17.4px;color:#2666ba;white-space:nowrap;transform:scaleX(0.9385057471264368);transform-origin:0 0;text-decoration:underline;text-decoration-color:rgba(42,105,184,0.55);text-decoration-thickness:1px;text-underline-offset:1.5px;">Ort</div><div style="position:absolute;left:925.0999999999999px;top:233.22px;font-size:17.4px;line-height:17.4px;color:#22262a;font-weight:normal;white-space:nowrap;transform:scaleX(0.8954022988505748);transform-origin:0 0;">CUSTOM_CITY</div><div style="position:absolute;left:0px;top:269.59999999999997px;width:1400px;height:55px;background:#f2f2f2;box-sizing:border-box;border-top:1px solid #e9ecef;"></div><div style="position:absolute;left:17px;top:287.4px;width:17px;height:17px;background:#fff;box-sizing:border-box;border:1px solid #d5d7da;border-radius:4px;"></div><div style="position:absolute;left:73.30000000000001px;top:287.99999999999994px;width:4.6px;height:4.6px;background:#e6e6e6;border-radius:50%;"></div><div style="position:absolute;left:73.30000000000001px;top:293.69999999999993px;width:4.6px;height:4.6px;background:#e6e6e6;border-radius:50%;"></div><div style="position:absolute;left:73.30000000000001px;top:299.3999999999999px;width:4.6px;height:4.6px;background:#e6e6e6;border-radius:50%;"></div><svg style="position:absolute;left:135.25px;top:282.34999999999997px;" width="28.5" height="28.5" viewBox="0 0 28 28" preserveAspectRatio="none"><circle cx="14" cy="14" r="13.1" fill="none" stroke="#428558" stroke-width="1.8"/>
<path d="M5.7 13.1 L11.4 18.3 L21.2 8.6" fill="none" stroke="#428558" stroke-width="3.2" stroke-linecap="butt" stroke-linejoin="miter"/></svg><svg style="position:absolute;left:675.5999999999999px;top:282.59999999999997px;" width="28" height="28" viewBox="0 0 28 28" preserveAspectRatio="none"><circle cx="14" cy="14" r="13.1" fill="none" stroke="#428558" stroke-width="1.8"/>
<path d="M5.7 13.1 L11.4 18.3 L21.2 8.6" fill="none" stroke="#428558" stroke-width="3.2" stroke-linecap="butt" stroke-linejoin="miter"/></svg><svg style="position:absolute;left:788.4000000000001px;top:282.59999999999997px;" width="28" height="28" viewBox="0 0 28 28" preserveAspectRatio="none"><circle cx="14" cy="14" r="13.1" fill="none" stroke="#428558" stroke-width="1.8"/>
<path d="M5.7 13.1 L11.4 18.3 L21.2 8.6" fill="none" stroke="#428558" stroke-width="3.2" stroke-linecap="butt" stroke-linejoin="miter"/></svg><div style="position:absolute;left:216.09999999999997px;top:287.27px;font-size:17.4px;line-height:17.4px;color:#22262a;font-weight:normal;white-space:nowrap;transform:scaleX(0.9580459770114944);transform-origin:0 0;">Rechnungsadresse</div><div style="position:absolute;left:395.09999999999997px;top:287.27px;font-size:17.4px;line-height:17.4px;color:#22262a;font-weight:normal;white-space:nowrap;transform:scaleX(0.9798850574712645);transform-origin:0 0;">select</div><div style="position:absolute;left:490.99999999999994px;top:287.27px;font-size:17.4px;line-height:17.4px;color:#2666ba;white-space:nowrap;transform:scaleX(0.9477011494252874);transform-origin:0 0;text-decoration:underline;text-decoration-color:rgba(42,105,184,0.55);text-decoration-thickness:1px;text-underline-offset:1.5px;">Land</div><div style="position:absolute;left:925.0999999999999px;top:287.27px;font-size:17.4px;line-height:17.4px;color:#22262a;font-weight:normal;white-space:nowrap;transform:scaleX(0.8925287356321839);transform-origin:0 0;">CUSTOM_COUNTRY</div><div style="position:absolute;left:0px;top:323.65px;width:1400px;height:55px;background:#fff;box-sizing:border-box;border-top:1px solid #e9ecef;"></div><div style="position:absolute;left:17px;top:341.45px;width:17px;height:17px;background:#fff;box-sizing:border-box;border:1px solid #d5d7da;border-radius:4px;"></div><div style="position:absolute;left:73.30000000000001px;top:342.04999999999995px;width:4.6px;height:4.6px;background:#e6e6e6;border-radius:50%;"></div><div style="position:absolute;left:73.30000000000001px;top:347.74999999999994px;width:4.6px;height:4.6px;background:#e6e6e6;border-radius:50%;"></div><div style="position:absolute;left:73.30000000000001px;top:353.44999999999993px;width:4.6px;height:4.6px;background:#e6e6e6;border-radius:50%;"></div><svg style="position:absolute;left:135.25px;top:336.4px;" width="28.5" height="28.5" viewBox="0 0 28 28" preserveAspectRatio="none"><circle cx="14" cy="14" r="13.1" fill="none" stroke="#428558" stroke-width="1.8"/>
<path d="M5.7 13.1 L11.4 18.3 L21.2 8.6" fill="none" stroke="#428558" stroke-width="3.2" stroke-linecap="butt" stroke-linejoin="miter"/></svg><svg style="position:absolute;left:675.5999999999999px;top:336.65px;" width="28" height="28" viewBox="0 0 28 28" preserveAspectRatio="none"><circle cx="14" cy="14" r="13.1" fill="none" stroke="#428558" stroke-width="1.8"/>
<path d="M5.7 13.1 L11.4 18.3 L21.2 8.6" fill="none" stroke="#428558" stroke-width="3.2" stroke-linecap="butt" stroke-linejoin="miter"/></svg><svg style="position:absolute;left:788.4000000000001px;top:336.65px;" width="28" height="28" viewBox="0 0 28 28" preserveAspectRatio="none"><circle cx="14" cy="14" r="13.1" fill="none" stroke="#428558" stroke-width="1.8"/>
<path d="M5.7 13.1 L11.4 18.3 L21.2 8.6" fill="none" stroke="#428558" stroke-width="3.2" stroke-linecap="butt" stroke-linejoin="miter"/></svg><div style="position:absolute;left:216.09999999999997px;top:341.32px;font-size:17.4px;line-height:17.4px;color:#22262a;font-weight:normal;white-space:nowrap;transform:scaleX(0.9580459770114944);transform-origin:0 0;">Rechnungsadresse</div><div style="position:absolute;left:395.09999999999997px;top:341.32px;font-size:17.4px;line-height:17.4px;color:#22262a;font-weight:normal;white-space:nowrap;transform:scaleX(0.9816091954022989);transform-origin:0 0;">text</div><div style="position:absolute;left:490.99999999999994px;top:341.32px;font-size:17.4px;line-height:17.4px;color:#2666ba;white-space:nowrap;transform:scaleX(1.006896551724138);transform-origin:0 0;text-decoration:underline;text-decoration-color:rgba(42,105,184,0.55);text-decoration-thickness:1px;text-underline-offset:1.5px;">Telefon</div><div style="position:absolute;left:925.0999999999999px;top:341.32px;font-size:17.4px;line-height:17.4px;color:#22262a;font-weight:normal;white-space:nowrap;transform:scaleX(0.9045977011494254);transform-origin:0 0;">CUSTOM_PHONE</div><div style="position:absolute;left:0px;top:377.69999999999993px;width:1400px;height:55px;background:#f2f2f2;box-sizing:border-box;border-top:1px solid #e9ecef;"></div><div style="position:absolute;left:17px;top:395.49999999999994px;width:17px;height:17px;background:#fff;box-sizing:border-box;border:1px solid #d5d7da;border-radius:4px;"></div><div style="position:absolute;left:73.30000000000001px;top:396.0999999999999px;width:4.6px;height:4.6px;background:#e6e6e6;border-radius:50%;"></div><div style="position:absolute;left:73.30000000000001px;top:401.7999999999999px;width:4.6px;height:4.6px;background:#e6e6e6;border-radius:50%;"></div><div style="position:absolute;left:73.30000000000001px;top:407.4999999999999px;width:4.6px;height:4.6px;background:#e6e6e6;border-radius:50%;"></div><svg style="position:absolute;left:135.25px;top:390.44999999999993px;" width="28.5" height="28.5" viewBox="0 0 28 28" preserveAspectRatio="none"><circle cx="14" cy="14" r="13.1" fill="none" stroke="#428558" stroke-width="1.8"/>
<path d="M5.7 13.1 L11.4 18.3 L21.2 8.6" fill="none" stroke="#428558" stroke-width="3.2" stroke-linecap="butt" stroke-linejoin="miter"/></svg><svg style="position:absolute;left:675.5999999999999px;top:390.69999999999993px;" width="28" height="28" viewBox="0 0 28 28" preserveAspectRatio="none"><circle cx="14" cy="14" r="13.1" fill="none" stroke="#428558" stroke-width="1.8"/>
<path d="M5.7 13.1 L11.4 18.3 L21.2 8.6" fill="none" stroke="#428558" stroke-width="3.2" stroke-linecap="butt" stroke-linejoin="miter"/></svg><svg style="position:absolute;left:788.9000000000001px;top:391.19999999999993px;" width="27" height="27" viewBox="0 0 28 28" preserveAspectRatio="none"><circle cx="14" cy="14" r="13" fill="none" stroke="#c9c9c9" stroke-width="2.1"/>
<path d="M9.2 9.2 L18.8 18.8 M18.8 9.2 L9.2 18.8" fill="none" stroke="#c9c9c9" stroke-width="2.8"/></svg><div style="position:absolute;left:216.09999999999997px;top:395.37px;font-size:17.4px;line-height:17.4px;color:#22262a;font-weight:normal;white-space:nowrap;transform:scaleX(0.9804597701149426);transform-origin:0 0;">Kontaktdaten</div><div style="position:absolute;left:395.09999999999997px;top:395.37px;font-size:17.4px;line-height:17.4px;color:#22262a;font-weight:normal;white-space:nowrap;transform:scaleX(0.9816091954022989);transform-origin:0 0;">text</div><div style="position:absolute;left:490.99999999999994px;top:395.37px;font-size:17.4px;line-height:17.4px;color:#2666ba;white-space:nowrap;transform:scaleX(0.989080459770115);transform-origin:0 0;text-decoration:underline;text-decoration-color:rgba(42,105,184,0.55);text-decoration-thickness:1px;text-underline-offset:1.5px;">Firma/Organisation</div><div style="position:absolute;left:925.0999999999999px;top:395.37px;font-size:17.4px;line-height:17.4px;color:#22262a;font-weight:normal;white-space:nowrap;transform:scaleX(0.9034482758620691);transform-origin:0 0;">CUSTOM_SP_COMPANY</div><div style="position:absolute;left:0px;top:431.74999999999994px;width:1400px;height:55px;background:#fff;box-sizing:border-box;border-top:1px solid #e9ecef;"></div><svg style="position:absolute;left:135.25px;top:444.49999999999994px;" width="28.5" height="28.5" viewBox="0 0 28 28" preserveAspectRatio="none"><circle cx="14" cy="14" r="13.1" fill="none" stroke="#428558" stroke-width="1.8"/>
<path d="M5.7 13.1 L11.4 18.3 L21.2 8.6" fill="none" stroke="#428558" stroke-width="3.2" stroke-linecap="butt" stroke-linejoin="miter"/></svg><svg style="position:absolute;left:675.5999999999999px;top:444.74999999999994px;" width="28" height="28" viewBox="0 0 28 28" preserveAspectRatio="none"><circle cx="14" cy="14" r="13.1" fill="none" stroke="#428558" stroke-width="1.8"/>
<path d="M5.7 13.1 L11.4 18.3 L21.2 8.6" fill="none" stroke="#428558" stroke-width="3.2" stroke-linecap="butt" stroke-linejoin="miter"/></svg><svg style="position:absolute;left:788.4000000000001px;top:444.74999999999994px;" width="28" height="28" viewBox="0 0 28 28" preserveAspectRatio="none"><circle cx="14" cy="14" r="13.1" fill="none" stroke="#428558" stroke-width="1.8"/>
<path d="M5.7 13.1 L11.4 18.3 L21.2 8.6" fill="none" stroke="#428558" stroke-width="3.2" stroke-linecap="butt" stroke-linejoin="miter"/></svg></div>
</body></html>
